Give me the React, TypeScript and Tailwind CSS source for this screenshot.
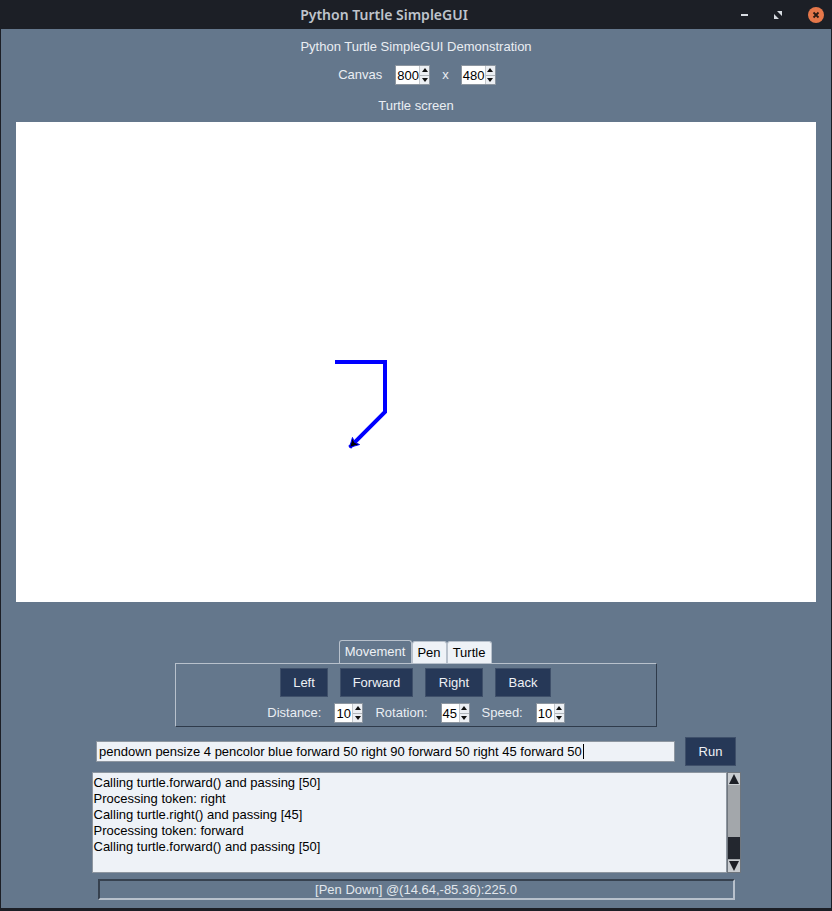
import React from "react";

const font = { fontFamily: '"Liberation Sans", Arial, sans-serif' };

function Spin({ value, w }: { value: string; w: string }) {
  return (
    <div className={`flex h-[20px] ${w} items-stretch border border-[#8d96a0] bg-white`}>
      <div className="flex flex-1 items-center pl-[1px] text-[13px] leading-none text-black">{value}</div>
      <div className="flex w-[10px] flex-col border-l border-[#c4c8cc] bg-[#eceff3]">
        <div className="flex flex-1 items-center justify-center border-b border-[#b0b5ba]">
          <svg width="6" height="4" viewBox="0 0 6 4"><path d="M3 0L6 4H0z" fill="#111" /></svg>
        </div>
        <div className="flex flex-1 items-center justify-center">
          <svg width="6" height="4" viewBox="0 0 6 4"><path d="M0 0h6L3 4z" fill="#111" /></svg>
        </div>
      </div>
    </div>
  );
}

function Btn({ label, w }: { label: string; w: string }) {
  return (
    <div className={`flex h-[29px] ${w} items-center justify-center border border-[#3f506a] bg-[#263857] text-[13px] text-[#eef1f5]`}>
      {label}
    </div>
  );
}

function Turtle() {
  // canvas coords: start at (319,240)
  return (
    <svg className="absolute left-0 top-0" width="800" height="480" viewBox="0 0 800 480">
      <polyline
        points="319,240 369,240 369,290 333.64,325.36"
        fill="none"
        stroke="#0000ff"
        strokeWidth="4"
        strokeLinejoin="miter"
      />
      <polygon
        points="333.64,325.36 343.54,322.54 338.59,320.41 336.46,315.46"
        fill="#000"
        stroke="#0000ff"
        strokeWidth="1"
      />
    </svg>
  );
}

export default function App() {
  return (
    <div className="flex h-[911px] w-[832px] flex-col bg-[#1c1f26]" style={font}>
      {/* title bar */}
      <div className="relative flex h-[29px] shrink-0 items-center justify-center pr-[64px]">
        <span className="text-[14px] font-semibold text-[#bfc4cc]" style={{ fontFamily: '"Noto Sans", sans-serif' }}>
          Python Turtle SimpleGUI
        </span>
        <div className="absolute right-[8px] top-0 flex h-[29px] items-center gap-[26px]">
          <div className="h-[2px] w-[7px] bg-[#d8dce2]" />
          <svg width="8" height="8" viewBox="0 0 8 8">
            <path d="M3 0h5v5zM0 3l5 5H0z" fill="#d8dce2" />
          </svg>
          <div className="flex h-[16px] w-[16px] items-center justify-center rounded-full bg-[#e5774a]">
            <svg width="8" height="8" viewBox="0 0 8 8">
              <path d="M1.5 1.5l5 5M6.5 1.5l-5 5" stroke="#2a1a14" strokeWidth="1.8" />
            </svg>
          </div>
        </div>
      </div>

      {/* content */}
      <div className="mx-[1px] mb-[3px] flex flex-1 flex-col items-center bg-[#64778c] text-[13px] text-[#eaeef3]">
        <div className="mt-[10px] leading-[16px]">Python Turtle SimpleGUI Demonstration</div>

        <div className="mt-[10px] flex items-center">
          <span className="mr-[13px] ml-[2px]">Canvas</span>
          <Spin value="800" w="w-[35px]" />
          <span className="mx-[12px]">x</span>
          <Spin value="480" w="w-[35px]" />
        </div>

        <div className="mt-[13px] leading-[16px]">Turtle screen</div>

        <div className="relative mt-[8px] h-[480px] w-[800px] bg-white">
          <Turtle />
        </div>

        {/* notebook */}
        <div className="mt-[38px] flex h-[23px] items-end pr-[2px]">
          <div className="flex h-[23px] w-[73px] items-center justify-center rounded-t-[3px] border border-b-0 border-[#b8c1cc] bg-[#64778c] text-[#eef1f5]">
            Movement
          </div>
          <div className="flex h-[22px] w-[35px] items-center justify-center rounded-t-[3px] border border-b-0 border-[#b8c1cc] bg-[#eef2f7] text-black">
            Pen
          </div>
          <div className="flex h-[22px] w-[45px] items-center justify-center rounded-t-[3px] border border-b-0 border-[#b8c1cc] bg-[#eef2f7] text-black">
            Turtle
          </div>
        </div>
        <div className="flex h-[64px] w-[482px] flex-col items-center border border-t-[#b8c1cc] border-l-[#b8c1cc] border-r-[#2f3b4b] border-b-[#2f3b4b]">
          <div className="mt-[4px] flex items-center gap-[12px] pr-[1px]">
            <Btn label="Left" w="w-[48px]" />
            <Btn label="Forward" w="w-[73px]" />
            <Btn label="Right" w="w-[58px]" />
            <Btn label="Back" w="w-[56px]" />
          </div>
          <div className="mt-[6px] flex items-center">
            <span className="mr-[13px]">Distance:</span>
            <Spin value="10" w="w-[29px]" />
            <span className="mr-[13px] ml-[12px]">Rotation:</span>
            <Spin value="45" w="w-[29px]" />
            <span className="mr-[13px] ml-[12px]">Speed:</span>
            <Spin value="10" w="w-[29px]" />
          </div>
        </div>

        {/* command row */}
        <div className="mt-[10px] flex items-center">
          <div className="flex h-[21px] w-[579px] items-center border border-[#8d96a0] bg-[#eef2f7] pl-[2px] text-black">
            pendown pensize 4 pencolor blue forward 50 right 90 forward 50 right 45 forward 50
            <span className="ml-[1px] inline-block h-[15px] w-[1px] bg-black" />
          </div>
          <div className="ml-[10px]">
            <Btn label="Run" w="w-[51px]" />
          </div>
        </div>

        {/* output */}
        <div className="mt-[6px] flex h-[101px] w-[649px]">
          <div className="flex-1 border border-[#8d96a0] bg-[#eef2f7] pl-[1px] pt-[2px] leading-[16px] text-black">
            <div>Calling turtle.forward() and passing [50]</div>
            <div>Processing token: right</div>
            <div>Calling turtle.right() and passing [45]</div>
            <div>Processing token: forward</div>
            <div>Calling turtle.forward() and passing [50]</div>
          </div>
          <div className="flex w-[14px] flex-col border border-[#6f767e] bg-[#a3a7ab]">
            <div className="flex h-[12px] items-center justify-center bg-[#c8ccd0]">
              <svg width="10" height="10" viewBox="0 0 10 10"><path d="M5 0L10 10H0z" fill="#1c1f26" /></svg>
            </div>
            <div className="flex-1" />
            <div className="mb-[1px] h-[22px] bg-[#23272f]" />
            <div className="flex h-[12px] items-center justify-center bg-[#c8ccd0]">
              <svg width="10" height="10" viewBox="0 0 10 10"><path d="M0 0h10L5 10z" fill="#1c1f26" /></svg>
            </div>
          </div>
        </div>

        {/* status */}
        <div className="mt-[6px] flex h-[21px] w-[637px] items-center justify-center border-2 border-t-[#36414f] border-l-[#36414f] border-r-[#b8c1cc] border-b-[#b8c1cc] text-[#e2e7ed]">
          [Pen Down] @(14.64,-85.36):225.0
        </div>
      </div>
    </div>
  );
}
